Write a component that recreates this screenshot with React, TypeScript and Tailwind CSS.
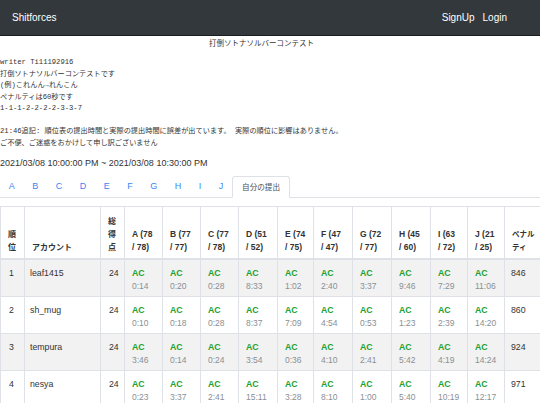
import React from "react";

type Row = {
  rank: number;
  name: string;
  score: number;
  times: string[];
  penalty: number;
};

const problems = [
  ["A", "78 / 78"],
  ["B", "77 / 77"],
  ["C", "77 / 78"],
  ["D", "51 / 52"],
  ["E", "74 / 75"],
  ["F", "47 / 47"],
  ["G", "72 / 77"],
  ["H", "45 / 60"],
  ["I", "63 / 72"],
  ["J", "21 / 25"],
];

const rows: Row[] = [
  { rank: 1, name: "leaf1415", score: 24, times: ["0:14", "0:20", "0:28", "8:33", "1:02", "2:40", "3:37", "9:46", "7:29", "11:06"], penalty: 846 },
  { rank: 2, name: "sh_mug", score: 24, times: ["0:10", "0:18", "0:28", "8:37", "7:09", "4:54", "0:53", "1:23", "2:39", "14:20"], penalty: 860 },
  { rank: 3, name: "tempura", score: 24, times: ["3:46", "0:14", "0:24", "3:54", "0:36", "4:10", "2:41", "5:42", "4:19", "14:24"], penalty: 924 },
  { rank: 4, name: "nesya", score: 24, times: ["0:23", "3:37", "2:41", "15:11", "3:28", "8:10", "1:00", "5:40", "10:19", "12:17"], penalty: 971 },
];

// 列幅（px）
const colWidths = [24, 76, 24, 38, 38, 38, 39, 36, 39, 39, 39, 37, 37, 36];

const statement = `writer Ti11192916
打倒ソトナソルバーコンテストです
(例)これんん→れんこん
ペナルティは60秒です
1-1-1-2-2-2-2-3-3-7

21:46追記: 順位表の提出時間と実際の提出時間に誤差が出ています。 実際の順位に影響はありません。
ご不便、ご迷惑をおかけして申し訳ございません`;

function Navbar() {
  return (
    <nav className="h-[36px] bg-[#33383d] border-b border-[#1b1e21] flex items-center pl-[12px] pr-[33px]">
      <span className="text-white text-[10px]">Shitforces</span>
      <div className="ml-auto flex items-center gap-[8px] text-white text-[10px]">
        <span>SignUp</span>
        <span>Login</span>
      </div>
    </nav>
  );
}

function Tabs() {
  const letters = problems.map((p) => p[0]);
  return (
    <div className="flex items-end h-[21px] border-b border-[#dee2e6]">
      {letters.map((l) => (
        <span key={l} className="px-[8.75px] h-[21px] leading-[21px] text-[9px] text-[#3a86f5]">
          {l}
        </span>
      ))}
      <span className="px-[9px] h-[22px] leading-[21px] -mb-px text-[7.6px] text-[#495057] bg-white border border-b-white border-[#dee2e6] rounded-t-[3px]">
        自分の提出
      </span>
    </div>
  );
}

function Standings() {
  return (
    <table className="table-fixed border-collapse w-[540px] text-[#333]">
      <colgroup>
        {colWidths.map((w, i) => (
          <col key={i} style={{ width: w }} />
        ))}
      </colgroup>
      <thead>
        <tr className="align-bottom">
          <th className="border border-b-2 border-[#dee2e6] pl-[7px] pr-[2px] pt-[8px] pb-[4px] text-left text-[8px] font-bold leading-[13px]">
            順<br />位
          </th>
          <th className="border border-b-2 border-[#dee2e6] px-[7px] pt-[8px] pb-[4px] text-left text-[8px] font-bold leading-[13px]">
            アカウント
          </th>
          <th className="border border-b-2 border-[#dee2e6] pl-[7px] pr-[2px] pt-[8px] pb-[4px] text-left text-[8px] font-bold leading-[13px]">
            総<br />得<br />点
          </th>
          {problems.map(([l, s]) => (
            <th
              key={l}
              className="border border-b-2 border-[#dee2e6] pl-[7px] pr-[2px] pt-[8px] pb-[4px] text-left text-[8.5px] font-bold leading-[13px] whitespace-nowrap"
            >
              {l} ({s.split(" / ")[0]}
              <br />/ {s.split(" / ")[1]})
            </th>
          ))}
          <th className="border border-b-2 border-[#dee2e6] pl-[7px] pr-[2px] pt-[8px] pb-[4px] text-left text-[7.5px] font-bold leading-[13px] whitespace-nowrap">
            ペナル<br />ティ
          </th>
        </tr>
      </thead>
      <tbody>
        {rows.map((r, idx) => (
          <tr key={r.rank} className={idx % 2 === 0 ? "align-top bg-[#f2f2f2]" : "align-top bg-white"}>
            <td className="border border-[#dee2e6] pl-[8px] pt-[7px] pb-[4px] text-[8.75px] leading-[13px]">{r.rank}</td>
            <td className="border border-[#dee2e6] pl-[5px] pt-[7px] pb-[4px] text-[8.75px] leading-[13px]">{r.name}</td>
            <td className="border border-[#dee2e6] pl-[8px] pt-[7px] pb-[4px] text-[8.75px] leading-[13px]">{r.score}</td>
            {r.times.map((t, i) => (
              <td key={i} className="border border-[#dee2e6] pl-[7px] pt-[7px] pb-[4px]">
                <div className="text-[8.75px] leading-[13px] font-bold text-[#22a12f]">AC</div>
                <div className="text-[8.5px] leading-[12px] text-[#8a8f94]">{t}</div>
              </td>
            ))}
            <td className="border border-[#dee2e6] pl-[6px] pt-[7px] pb-[4px] text-[8.75px] leading-[13px]">{r.penalty}</td>
          </tr>
        ))}
      </tbody>
    </table>
  );
}

export default function App() {
  return (
    <div className="w-[540px] min-h-[403px] bg-white font-['Liberation_Sans','Noto_Sans_CJK_JP',sans-serif] overflow-hidden">
      <Navbar />

      {/* コンテスト名 */}
      <div className="pr-[17px] text-center text-[7.5px] leading-[14px] text-[#333] mt-px">打倒ソトナソルバーコンテスト</div>

      {/* 問題文 */}
      <pre className="mt-[6px] whitespace-pre font-['Liberation_Mono','Noto_Sans_CJK_JP',monospace] text-[7.2px] leading-[11.5px] text-[#333]">
        {statement}
      </pre>

      {/* 開催期間 */}
      <div className="mt-[7px] text-[9px] leading-[14px] text-[#333]">
        2021/03/08 10:00:00 PM ~ 2021/03/08 10:30:00 PM
      </div>

      <div className="mt-[7px]">
        <Tabs />
      </div>

      <div className="mt-[8px]">
        <Standings />
      </div>
    </div>
  );
}
